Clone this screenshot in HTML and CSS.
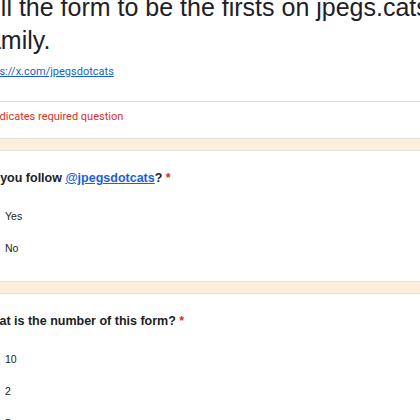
FILE: index.html
```html
<!DOCTYPE html>
<html lang="en">
<head>
<meta charset="utf-8">
<title>jpegs.cats form</title>
<link rel="stylesheet" href="styles.css">
</head>
<body>
<div class="form">
  <section class="card header">
    <h1 class="title">Fill the form to be the firsts on jpegs.cats family.</h1>
    <a class="desc-link" href="#">https://x.com/jpegsdotcats</a>
    <div class="divider"></div>
    <div class="required"><span class="star">*</span> Indicates required question</div>
  </section>

  <section class="card question">
    <div class="q-title">Do you follow <a class="q-link" href="#">@jpegsdotcats</a>? <span class="star">*</span></div>
    <div class="options">
      <label class="option"><span class="radio"></span><span class="opt-label">Yes</span></label>
      <label class="option"><span class="radio"></span><span class="opt-label">No</span></label>
    </div>
  </section>

  <section class="card question">
    <div class="q-title">What is the number of this form? <span class="star">*</span></div>
    <div class="options">
      <label class="option"><span class="radio"></span><span class="opt-label">10</span></label>
      <label class="option"><span class="radio"></span><span class="opt-label">2</span></label>
      <label class="option"><span class="radio"></span><span class="opt-label">5</span></label>
    </div>
  </section>
</div>
</body>
</html>
```

FILE: styles.css
```css
html, body {
  margin: 0;
  padding: 0;
}

body {
  background: #fcf0dd;
  overflow: hidden;
  font-family: "Liberation Sans", Arial, sans-serif;
  color: #202124;
}

.form {
  width: 550px;
  margin: -34px 0 0 -45px;
  display: flex;
  flex-direction: column;
  gap: 11px;
}

.card {
  background: #fff;
  border: 1px solid #e3dfd9;
  padding: 0 24px;
}

.header {
  padding-top: 24px;
  padding-bottom: 13px;
}

.title {
  margin: 0;
  font-weight: 400;
  font-size: 25px;
  line-height: 33px;
  color: #202124;
}

.desc-link {
  display: block;
  margin-top: 7px;
  font-family: Roboto, "Liberation Sans", sans-serif;
  font-size: 11px;
  line-height: 16px;
  color: #1a5fd0;
  text-decoration: underline;
}

.divider {
  height: 1px;
  background: #dadce0;
  margin: 21px -24px 0;
}

.required {
  margin-top: 7px;
  margin-left: 3px;
  font-family: Roboto, "Liberation Sans", sans-serif;
  font-size: 11px;
  line-height: 16px;
  color: #d93025;
}

.star {
  color: #d93025;
}

.question {
  padding-top: 18px;
  padding-bottom: 17px;
}

.q-title {
  font-weight: 700;
  font-size: 12.5px;
  line-height: 18px;
}

.q-link {
  color: #1a62d6;
  text-decoration: underline;
}

.options {
  margin-top: 13px;
  display: flex;
  flex-direction: column;
}

.option {
  display: flex;
  align-items: center;
  gap: 17px;
  height: 32px;
  margin-left: -12px;
  font-size: 10.5px;
}

.radio {
  width: 16px;
  height: 16px;
  border: 2px solid #5f6368;
  border-radius: 50%;
  flex: none;
}

.opt-label {
  color: #202124;
}
```
